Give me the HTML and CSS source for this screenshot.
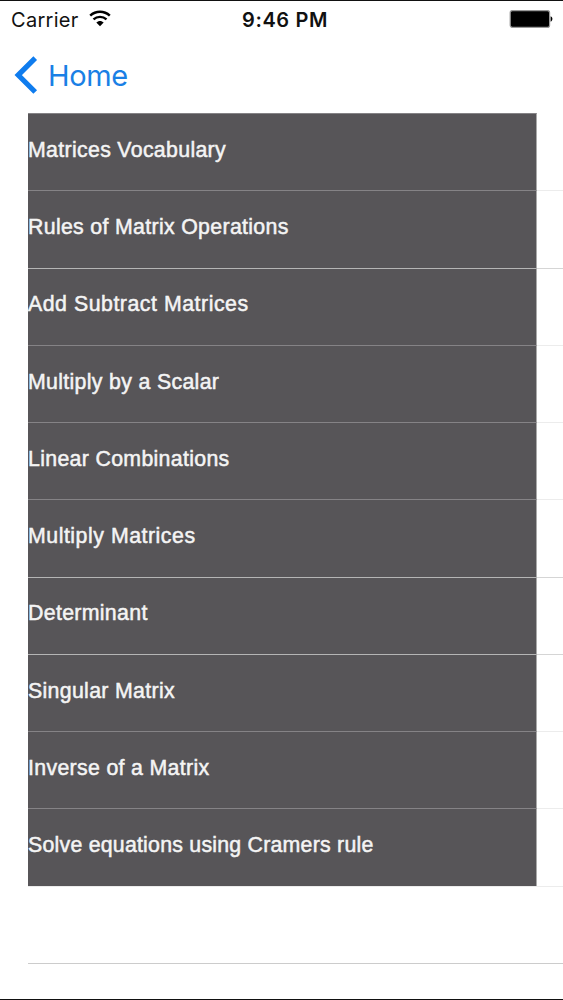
FILE: index.html
```html
<!DOCTYPE html>
<html lang="en">
<head>
  <meta charset="UTF-8" />
  <meta name="viewport" content="width=device-width, initial-scale=1.0"/>
  <title>Matrices</title>
  <link rel="stylesheet" href="styles.css">
</head>
<body>
<div class="screen">
  <header class="status">
    <div class="carrier">
      <span class="carrier-name">Carrier</span>
      <svg class="wifi" width="22" height="17" viewBox="0 0 22 17">
        <path d="M1.2 5.6C6.8.5 15.2.5 20.8 5.6" fill="none" stroke="#000" stroke-width="2.5"/>
        <path d="M4.5 9.4C8.2 6 13.8 6 17.5 9.4" fill="none" stroke="#000" stroke-width="2.4"/>
        <path d="M7.3 12.5C9.4 10.4 12.6 10.4 14.7 12.5L11 16.2Z" fill="#000"/>
      </svg>
    </div>
    <div class="time">9:46 PM</div>
    <svg class="battery" width="44" height="18" viewBox="0 0 44 18">
      <rect x="1.2" y=".6" width="39.4" height="16.8" rx="2.2" fill="#000" stroke="#999" stroke-width="1.2"/>
      <path d="M41.6 6.3C44 7 44 11 41.6 11.7Z" fill="#000"/>
    </svg>
  </header>
  <nav class="nav">
    <a class="back">
      <svg class="chevron" width="24" height="38" viewBox="0 0 24 38">
        <path d="M21.2 2.2L4.2 19.1L21.2 36" fill="none" stroke="#0f7cee" stroke-width="5.2"/>
      </svg>
      <span class="back-label">Home</span>
    </a>
  </nav>
  <ul class="list">
    <li class="row"><span class="cell">Matrices Vocabulary</span></li>
    <li class="row"><span class="cell">Rules of Matrix Operations</span></li>
    <li class="row strong"><span class="cell wide">Add Subtract Matrices</span></li>
    <li class="row"><span class="cell">Multiply by a Scalar</span></li>
    <li class="row"><span class="cell">Linear Combinations</span></li>
    <li class="row"><span class="cell wide">Multiply Matrices</span></li>
    <li class="row strong"><span class="cell">Determinant</span></li>
    <li class="row strong"><span class="cell">Singular Matrix</span></li>
    <li class="row"><span class="cell">Inverse of a Matrix</span></li>
    <li class="row"><span class="cell tight">Solve equations using Cramers rule</span></li>
    <li class="row"></li>
    <li class="row last"></li>
  </ul>
</div>
</body>
</html>
```
FILE: styles.css
```css
* { box-sizing: border-box; }
html, body { margin:0; padding:0; background:#fff; }
body { font-family:"Liberation Sans", Arial, sans-serif; }
.screen {
  width:563px; height:1000px; overflow:hidden;
  display:flex; flex-direction:column;
  border-top:1px solid #111; border-bottom:1px solid #111;
}
.status {
  display:grid; grid-template-columns:1fr auto 1fr; align-items:center;
  height:38px; flex:none; padding:0 10px 1px 11px;
  font-family:Inter, "Liberation Sans", sans-serif; font-size:20px; color:#111;
}
.carrier { display:flex; align-items:center; gap:10px; }
.carrier-name { letter-spacing:.3px; }
.wifi { margin-bottom:3px; }
.time { font-weight:600; letter-spacing:.6px; padding-left:6px; }
.battery { justify-self:end; margin-bottom:1px; }
.nav { height:74px; flex:none; padding:0 14px 2px; display:flex; align-items:center; }
.back {
  display:flex; align-items:center; gap:10px;
  font-family:Inter, "Liberation Sans", sans-serif; font-size:29px; color:#1a80e5;
}
.back-label { letter-spacing:-.4px; }
.list { list-style:none; margin:0; padding:0 0 0 28px; }
.row { height:77.28px; border-top:1px solid #ececec; }
.cell {
  display:flex; align-items:center;
  width:509px; height:77.28px; margin-top:-1px; padding-bottom:3.5px;
  background:#575558; border-top:1px solid #858386; border-right:1px solid #aaa;
  color:#f4f4f4; font-size:21.3px; letter-spacing:.33px;
  -webkit-text-stroke:.5px #f4f4f4;
}
.wide { letter-spacing:.53px; }
.tight { letter-spacing:.24px; }
.row:first-child { border-top-color:transparent; }
.strong { border-top-color:#d5d5d5; }
.strong .cell { border-top-color:#b5b5b5; }
.last { border-top-color:#ccc; }
```
